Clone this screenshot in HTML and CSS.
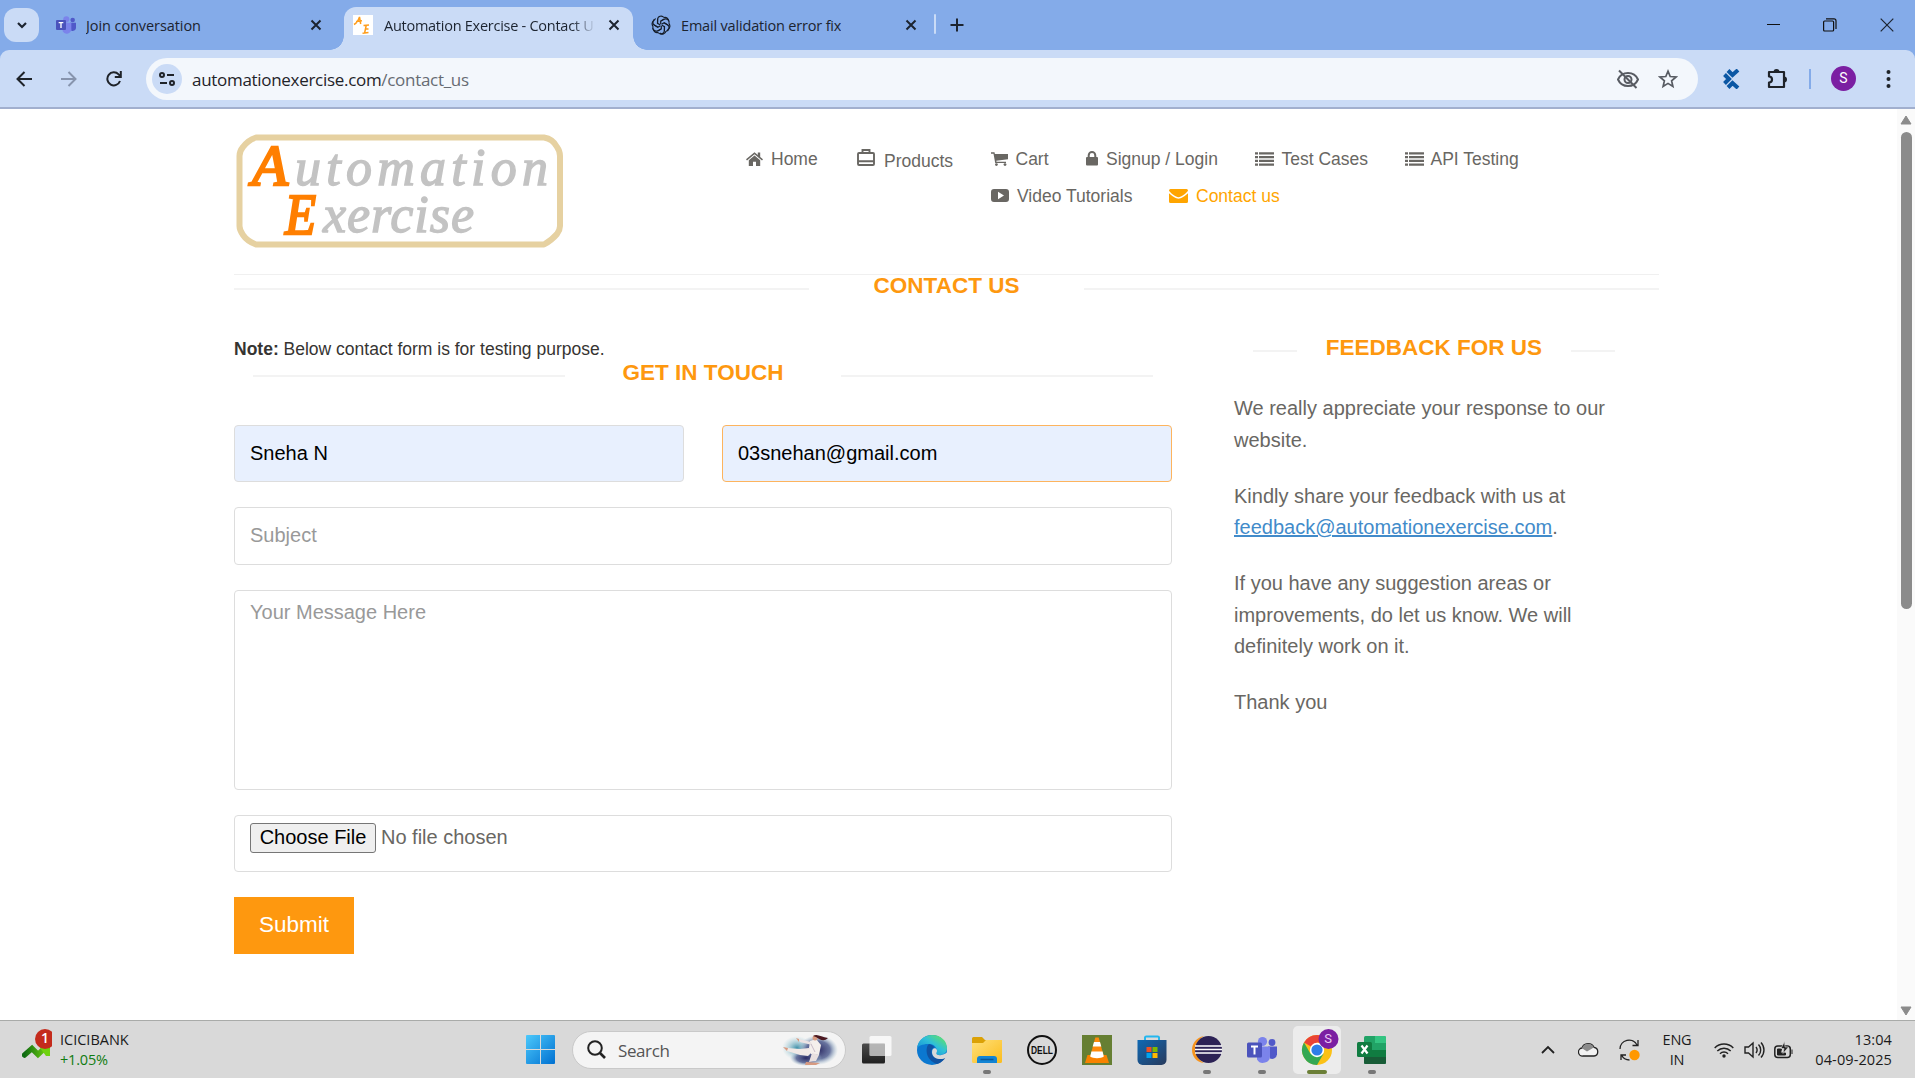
FILE: index.html
```html
<!DOCTYPE html>
<html lang="en">
<head>
<meta charset="utf-8">
<title>Automation Exercise - Contact Us</title>
<link rel="stylesheet" href="styles.css">
</head>
<body>
<svg class="defs" width="0" height="0">
  <defs>
    <symbol id="close" viewBox="0 0 12 12"><path d="M1.5 1.5l9 9M10.5 1.5l-9 9" stroke="#1c2430" stroke-width="2" fill="none"/></symbol>
    <symbol id="list" viewBox="0 0 19 14"><path d="M0 1.3h3M4 1.3h15M0 5.1h3M4 5.1h15M0 8.9h3M4 8.9h15M0 12.7h3M4 12.7h15" stroke="currentColor" stroke-width="2.2"/></symbol>
    <symbol id="teams" viewBox="0 0 30 27">
      <circle cx="25" cy="6" r="3.4" fill="#5059c9"/><path d="M21 10h9v8a5 5 0 0 1-7 4z" fill="#5059c9"/>
      <circle cx="15.500" cy="5" r="4.600" fill="#7b83eb"/><path d="M10 10h13v9a7 7 0 0 1-13 4z" fill="#7b83eb"/>
      <rect x="0" y="6" width="15" height="15" rx="1.500" fill="#4b53bc"/><path d="M4 10h7M7.500 10v8" stroke="#fff" stroke-width="2"/>
    </symbol>
    <linearGradient id="gwin" x2="1" y2="1"><stop stop-color="#4cc9fb"/><stop offset="1" stop-color="#0070d1"/></linearGradient>
    <linearGradient id="gedge" x1="0" y1="1" x2="1" y2="0"><stop stop-color="#0c7fd9"/><stop offset=".55" stop-color="#2fc0d8"/><stop offset="1" stop-color="#6bea4d"/></linearGradient>
    <linearGradient id="gfold" x2="1" y2="1"><stop stop-color="#ffe07a"/><stop offset="1" stop-color="#fbbc1c"/></linearGradient>
    <linearGradient id="gstore" x2="1" y2="1"><stop stop-color="#0f69b4"/><stop offset="1" stop-color="#283a5c"/></linearGradient>
    <linearGradient id="gdark" y2="1" x2="0"><stop stop-color="#4b4b4b"/><stop offset="1" stop-color="#202020"/></linearGradient>
    <linearGradient id="gstock" x2="1"><stop stop-color="#0f6b12"/><stop offset="1" stop-color="#6fd20e"/></linearGradient>
    <radialGradient id="gart"><stop stop-color="#2b2a63"/><stop offset=".6" stop-color="#5a6796" stop-opacity=".9"/><stop offset="1" stop-color="#9bbdd0" stop-opacity="0"/></radialGradient>
    <radialGradient id="gart2"><stop stop-color="#3f8fa8"/><stop offset="1" stop-color="#9bcbd8" stop-opacity="0"/></radialGradient>
  </defs>
</svg>

<div class="tabstrip">
  <div class="tab-search"><svg width="10" height="7" viewBox="0 0 10 7"><path d="M1 1l4 4 4-4" fill="none" stroke="#1c2430" stroke-width="2.2"/></svg></div>
  <div class="tab tab-join">
    <svg width="20" height="20" viewBox="0 0 30 27"><use href="#teams" width="30" height="27"/></svg>
    <span class="tab-title t-join">Join conversation</span>
    <svg class="x" width="12" height="12"><use href="#close"/></svg>
  </div>
  <div class="tab tab-active">
    <svg class="favicon" width="20" height="20" viewBox="0 0 20 20"><rect width="20" height="20" fill="#fff"/><path d="M1 9.500C4 8 5.500 5 6.500 2l1.200 7M3 6.500l6-.8M10.500 10.500l5.500-.6M13.200 10.500l-1.600 7.500M12.500 14h3M9.500 18.300l6-.8" fill="none" stroke="#ff9d1b" stroke-width="1.500"/></svg>
    <span class="tab-title t-active">Automation Exercise - Contact U</span>
    <svg class="x" width="12" height="12"><use href="#close"/></svg>
  </div>
  <div class="tab tab-email">
    <svg width="20" height="20" viewBox="-10 -10 20 20"><g fill="none" stroke="#141c28" stroke-width="1.150"><g id="petal"><path d="M-3.400 -1.900V-5.400A3.500 3.500 0 0 1 2.900 -7.500M3.400 -5.900L-.3 -3.900V-.8"/></g><use href="#petal" transform="rotate(60)"/><use href="#petal" transform="rotate(120)"/><use href="#petal" transform="rotate(180)"/><use href="#petal" transform="rotate(240)"/><use href="#petal" transform="rotate(300)"/><path d="M2.900-7.500A3.700 3.700 0 0 1 7.600-3.600M7.900-1.300A3.700 3.700 0 0 1 6.400 4.700M5 6.200A3.700 3.700 0 0 1-1.200 8M-2.900 7.500A3.700 3.700 0 0 1-7.600 3.600M-7.900 1.300A3.700 3.700 0 0 1-6.400-4.700"/></g></svg>
    <span class="tab-title t-email">Email validation error fix</span>
    <svg class="x" width="12" height="12"><use href="#close"/></svg>
  </div>
  <i class="tab-sep"></i>
  <svg class="newtab" width="14" height="14" viewBox="0 0 14 14"><path d="M7 .5v13M.5 7h13" stroke="#1c2430" stroke-width="2"/></svg>
  <div class="winctl">
    <svg width="13" height="14" viewBox="0 0 13 14"><path d="M0 6.500h13" stroke="#111"/></svg>
    <svg width="14" height="14" viewBox="0 0 14 14"><rect x=".6" y="3" width="10" height="10" rx="1" fill="none" stroke="#111" stroke-width="1.200"/><path d="M3 .9h8a2 2 0 0 1 2 2v8" fill="none" stroke="#111" stroke-width="1.200"/></svg>
    <svg width="14" height="14" viewBox="0 0 14 14"><path d="M.7.7l12.600 12.600M13.300.7L.7 13.300" stroke="#1c2430" stroke-width="1.200"/></svg>
  </div>
</div>

<div class="toolbar-back"><div class="toolbar">
  <div class="navbtns">
    <svg width="16" height="16" viewBox="0 0 16 16"><path d="M16 8H1.500M8.500 1L1.500 8l7 7" fill="none" stroke="#1f2329" stroke-width="2"/></svg>
    <svg width="16" height="16" viewBox="0 0 16 16"><path d="M0 8h14.500M7.500 1l7 7-7 7" fill="none" stroke="#8794ad" stroke-width="2"/></svg>
    <svg width="16" height="16" viewBox="0 0 16 16"><path d="M14 10A6.500 6.500 0 1 1 12.600 3.400L14.500 5.300M14.800 0v6h-6" fill="none" stroke="#1f2329" stroke-width="2"/></svg>
  </div>
  <div class="omnibox">
    <span class="chip"><svg width="16" height="14" viewBox="0 0 16 14"><g fill="none" stroke="#1f2329" stroke-width="2"><circle cx="3" cy="3" r="2"/><path d="M8 3h7M1 11h7"/><circle cx="13" cy="11" r="2"/></g></svg></span>
    <span class="url">automationexercise.com<span>/contact_us</span></span>
    <svg class="eye" width="22" height="20" viewBox="0 0 22 20"><g fill="none" stroke="#575b62" stroke-width="2"><path d="M1 10.500C3 6 7 4 11 4s8 2 10 6.500c-2 4.500-6 6.500-10 6.500s-8-2-10-6.500z"/><circle cx="11" cy="10.500" r="3.500"/><path d="M2 1.500l17.500 17.500"/></g></svg>
    <svg class="star" width="20" height="20" viewBox="0 0 20 20"><path d="M10 2.200l2.200 5.300 5.800.5-4.400 3.800 1.300 5.600L10 14.400l-4.900 3 1.300-5.600L2 8l5.800-.5z" fill="none" stroke="#575b62" stroke-width="1.700"/></svg>
  </div>
  <svg class="ext" width="18" height="20" viewBox="0 0 18 20"><path d="M6 1.500L10.500 6 16 1M2.500 5.500L7 10l-4.500 4.500M6 18.500l4.500-4.500L16 19" fill="none" stroke="#0b57a4" stroke-width="4"/></svg>
  <svg class="puzzle" width="21" height="21" viewBox="0 0 21 21"><path d="M2 4h15v15H2v-4.500a3 3 0 0 0 0-6z" fill="none" stroke="#1f2329" stroke-width="2.200" stroke-linejoin="round"/><path d="M6.500 4a3 3 0 0 1 6 0zM17 8.500a3 3 0 0 1 0 6z" fill="#1f2329"/></svg>
  <i class="bar-sep"></i>
  <span class="avatar">S</span>
  <svg class="kebab" width="5" height="20" viewBox="0 0 5 20"><g fill="#1f2329"><circle cx="2.500" cy="3" r="2"/><circle cx="2.500" cy="10" r="2"/><circle cx="2.500" cy="17" r="2"/></g></svg>
</div></div>

<div class="viewport">
  <div class="page">
    <header class="site-head">
      <svg class="logo" width="328" height="114" viewBox="0 0 328 114">
        <path d="M20 3.500H308Q317 5 321 13Q324 17 324 22V92Q324 96 321 100Q316 106 308 110.500H20Q11 107 7 101Q3.500 96 3.500 92V22Q3.500 17 7 13Q12 6 20 3.500z" fill="#fff" stroke="#e6d1a1" stroke-width="6" stroke-linejoin="round"/>
        <g class="script">
          <text class="cap" x="16" y="51" font-size="56" textLength="36" lengthAdjust="spacingAndGlyphs">A</text>
          <text x="59" y="51" font-size="52" textLength="253" lengthAdjust="spacing">utomation</text>
          <text class="cap" x="49" y="100" font-size="57" textLength="31" lengthAdjust="spacingAndGlyphs">E</text>
          <text x="87" y="98" font-size="52" textLength="151" lengthAdjust="spacing">xercise</text>
        </g>
      </svg>
      <nav class="menu">
        <div class="menu-row">
          <a class="m-home"><svg width="17" height="14" viewBox="0 0 17 14"><path d="M0 7.300L8.500.2l3.300 2.700V.6h2.400v4.300L17 7.300l-1 1.100-7.500-6.200L1 8.400z"/><path d="M2.800 8.300l5.700-4.700 5.700 4.700V14H10V9.800H7V14H2.800z"/></svg><span>Home</span></a>
          <a class="m-prod"><svg width="18" height="17" viewBox="0 0 18 17"><g fill="none" stroke="currentColor" stroke-width="1.900"><rect x="1" y="4" width="16" height="12" rx="1"/><path d="M5.500 4V1h7v3M1 12.200h16"/></g></svg><span>Products</span></a>
          <a class="m-cart"><svg width="17" height="14" viewBox="0 0 17 14"><path d="M0 .3h3.500l.4 1.600H17v5.300L5.300 8.700l.2 1H15v1.400H4.200L2.500 1.700H0z"/><circle cx="5.400" cy="12.600" r="1.400"/><circle cx="14" cy="12.600" r="1.400"/></svg><span>Cart</span></a>
          <a class="m-sign"><svg width="12" height="15" viewBox="0 0 12 15"><rect y="6" width="12" height="8.500" rx="1"/><path d="M2.700 7V4.400a3.300 3.300 0 0 1 6.600 0V7" fill="none" stroke="currentColor" stroke-width="2"/></svg><span>Signup / Login</span></a>
          <a class="m-test"><svg width="19" height="14"><use href="#list"/></svg><span>Test Cases</span></a>
          <a class="m-api"><svg width="19" height="14"><use href="#list"/></svg><span>API Testing</span></a>
        </div>
        <div class="menu-row second">
          <a class="m-video"><svg width="18" height="13" viewBox="0 0 18 13"><path fill-rule="evenodd" d="M3 0h12a3 3 0 0 1 3 3v7a3 3 0 0 1-3 3H3a3 3 0 0 1-3-3V3a3 3 0 0 1 3-3zm4 2.800v7.400l6-3.700z"/></svg><span>Video Tutorials</span></a>
          <a class="m-contact"><svg width="19" height="14" viewBox="0 0 19 14"><path d="M0 1.500A1.500 1.500 0 0 1 1.500 0h16A1.500 1.500 0 0 1 19 1.500C18 4 12 8.200 9.500 8.200S1 4 0 1.500z"/><path d="M0 4.300c3 3 7 5.400 9.500 5.400S16 7.300 19 4.300V12.500A1.500 1.500 0 0 1 17.500 14h-16A1.500 1.500 0 0 1 0 12.500z"/></svg><span>Contact us</span></a>
        </div>
      </nav>
    </header>
    <h2 class="heading main-heading"><i></i><span>Contact Us</span><i></i></h2>
    <div class="columns">
      <section class="form-col">
        <p class="note"><b>Note:</b> Below contact form is for testing purpose.</p>
        <h2 class="heading touch-heading"><i></i><span>Get In Touch</span><i></i></h2>
        <form class="contact-form">
          <div class="pair">
            <input class="field filled" value="Sneha N">
            <input class="field filled active" value="03snehan@gmail.com">
          </div>
          <input class="field subject" placeholder="Subject">
          <textarea class="field message" placeholder="Your Message Here"></textarea>
          <div class="field file"><button type="button">Choose File</button><span>No file chosen</span></div>
          <button class="submit" type="button">Submit</button>
        </form>
      </section>
      <aside class="feedback">
        <h2 class="heading feed-heading"><i></i><span>Feedback For Us</span><i></i></h2>
        <p>We really appreciate your response to our<br>website.</p>
        <p>Kindly share your feedback with us at<br><a>feedback@automationexercise.com</a>.</p>
        <p>If you have any suggestion areas or<br>improvements, do let us know. We will<br>definitely work on it.</p>
        <p>Thank you</p>
      </aside>
    </div>
  </div>
  <div class="scrollbar">
    <svg width="12" height="10" viewBox="0 0 12 10"><path d="M6 1l5 8H1z" fill="#8b8b8b" stroke="#8b8b8b" stroke-linejoin="round"/></svg>
    <i class="thumb"></i>
    <svg class="down" width="12" height="10" viewBox="0 0 12 10"><path d="M6 9l5-8H1z" fill="#8b8b8b" stroke="#8b8b8b" stroke-linejoin="round"/></svg>
  </div>
</div>

<div class="taskbar">
  <div class="widget">
    <svg width="30" height="32" viewBox="0 0 30 32"><path d="M2.500 27l7.500-6.500 6 6L25 18" fill="none" stroke="url(#gstock)" stroke-width="5.500" stroke-linecap="round"/><path d="M16 17h12v11h-4z" fill="#6fd20e"/><circle cx="23" cy="11" r="10" fill="#c42b1c"/></svg>
    <b class="badge">1</b>
    <div class="stock"><span>ICICIBANK</span><span class="up">+1.05%</span></div>
  </div>
  <svg class="start" width="29" height="29" viewBox="0 0 29 29"><path d="M1 0h13v14H0V1a1 1 0 0 1 1-1zM15 0h13a1 1 0 0 1 1 1v13H15zM0 15h14v14H1a1 1 0 0 1-1-1zM15 15h14v13a1 1 0 0 1-1 1H15z" fill="url(#gwin)"/></svg>
  <div class="search">
    <svg width="19" height="19" viewBox="0 0 19 19"><circle cx="8" cy="8" r="6.800" fill="none" stroke="#222" stroke-width="2"/><path d="M13 13l5 5" stroke="#222" stroke-width="2.600"/></svg>
    <span>Search</span>
    <svg class="art" width="56" height="32" viewBox="0 0 56 32"><ellipse cx="15" cy="14" rx="15" ry="12" fill="url(#gart2)"/><ellipse cx="36" cy="16" rx="20" ry="15" fill="url(#gart)"/><ellipse cx="24" cy="24" rx="16" ry="8" fill="url(#gart)"/><path d="M5 14l13 1 9-1 4 3-5 5-8-1-13-4z" fill="#f1e9e6"/><path d="M28 7l6-2 5 6-2 10-8-1-2-6z" fill="#f5efec"/><path d="M17 5l12 3 1 3-12-3z" fill="#ece3e3"/><path d="M30 19l7 2-3 6-7 1z" fill="#e9e0e0"/><path d="M29 10l4 8" stroke="#c9bcc8" fill="none"/><circle cx="33" cy="4" r="2.500" fill="#d79a80"/><path d="M31 2c4-3 8 1 15 2-4 4-8 2-12-1z" fill="#4b1820"/><path d="M1 13l5 1-1 3zM14 4l3 1v3zM24 28l14 1-4 2H23z" fill="#d79a80"/></svg>
  </div>
  <div class="apps">
    <span class="app"><svg width="30" height="30" viewBox="0 0 30 30"><rect x="0" y="8.500" width="23" height="20" rx="1.500" fill="url(#gdark)"/><rect x="7.500" y="1" width="22" height="20" rx="1.500" fill="#fff" fill-opacity=".78"/><path d="M7.500 8.500H23V21H7.500z" fill="#888" fill-opacity=".42"/></svg></span>
    <span class="app"><svg width="30" height="30" viewBox="0 0 30 30"><circle cx="15" cy="15" r="15" fill="#0b78d0"/><path d="M0 13C1 5 8 0 15 0c9 0 15 6 15 13 0 5-4 7-7 7-4 0-5-2-4-3 2-3-1-8-7-8C7 8.500 1 11 0 13z" fill="url(#gedge)"/><path d="M12 9c-4 3-4 16 8 20 4-1 7-4 8.500-6.500-5 3-13 1-14-5-.5-3 1.500-5 3-5-1-2-3-3-5.500-3.500z" fill="#1153a2"/><path d="M19.500 17.500c-1 1.500 1 3 4 2.700 2.500-.2 5-1.500 7-3v5l-1.500.5c-5 3-14 1-14-5.500 0-3 1.500-4.300 3-4 2 .5 2.500 2.500 1.500 4.300z" fill="#d9d9d9"/></svg></span>
    <span class="app run"><svg width="30" height="30" viewBox="0 0 30 30"><path d="M0 3.500A1.500 1.500 0 0 1 1.500 2H10l3 3h16v7H0z" fill="#dba106"/><path d="M0 8h11l3-3h16v21.500a1.500 1.500 0 0 1-1.500 1.500h-27A1.500 1.500 0 0 1 0 26.500z" fill="url(#gfold)"/><path d="M5 28v-4a3 3 0 0 1 3-3h14a3 3 0 0 1 3 3v4z" fill="#1284d4"/><path d="M8.500 24.500h13" stroke="#0b5797" stroke-width="1.500"/></svg></span>
    <span class="app"><svg width="30" height="30" viewBox="0 0 30 30"><circle cx="15" cy="15" r="14" fill="none" stroke="#111" stroke-width="2"/><text x="4" y="18.800" font-size="10.500" textLength="22" lengthAdjust="spacingAndGlyphs" class="dell">DELL</text></svg></span>
    <span class="app"><svg width="30" height="30" viewBox="0 0 30 30"><path fill="#667f33" d="M0 0h30v30H0z"/><path d="M5.500 20h19l2.500 8H3z" fill="#f98200"/><path d="M13.300 2.500h3.400L22 22c-3 2-11 2-14 0z" fill="#ff8a0a"/><path d="M12 7h6l1.300 4.500h-8.600zM9.400 16.500h11.200l1.200 5c-3 2.200-10.600 2.200-13.600 0z" fill="#fff"/></svg></span>
    <span class="app"><svg width="30" height="30" viewBox="0 0 30 30"><path d="M8 6V2.500A1.200 1.200 0 0 1 9.200 1.500h11.600A1.200 1.200 0 0 1 22 2.500V6" fill="none" stroke="#24b7ef" stroke-width="2"/><path d="M.5 5h29v20a5 5 0 0 1-5 5h-19a5 5 0 0 1-5-5z" fill="url(#gstore)"/><path fill="#f25022" d="M9.500 12h5v5h-5z"/><path fill="#7fba00" d="M15.500 12h5v5h-5z"/><path fill="#00a4ef" d="M9.500 18h5v5h-5z"/><path fill="#ffb900" d="M15.500 18h5v5h-5z"/></svg></span>
    <span class="app run"><svg width="30" height="30" viewBox="0 0 30 30"><path d="M12 1C-4 4-4 26 12 28 1 22 1 7 12 1z" fill="#f7941e"/><circle cx="16.500" cy="14.500" r="13.500" fill="#2c2255"/><path d="M3 11h27M3 14.500h27M3 18h27" stroke="#fff" stroke-width="1.500"/></svg></span>
    <span class="app run"><svg width="30" height="30" viewBox="0 0 30 27"><use href="#teams" width="30" height="27"/></svg></span>
    <span class="app chrome"><svg width="42" height="42" viewBox="0 0 42 42"><circle cx="18" cy="24" r="15" fill="#fbc116"/><path d="M18 24L5 16.500A15 15 0 0 1 31 16.500H18z" fill="#ea4335"/><path d="M5 16.500A15 15 0 0 0 18 39l6.500-11.200L18 24l-6.500 3.800z" fill="#34a853"/><circle cx="18" cy="24" r="7.200" fill="#fff"/><circle cx="18" cy="24" r="5.600" fill="#2f7de9"/><circle cx="29.500" cy="13" r="10" fill="#7b1fa2"/></svg><b>S</b></span>
    <span class="app run"><svg width="30" height="30" viewBox="0 0 30 30"><rect x="7" y="1" width="22" height="28" rx="1.500" fill="#21a366"/><path fill="#33c481" d="M18 1h9.500A1.500 1.500 0 0 1 29 2.500V8H18z"/><path fill="#107c41" d="M7 15h22v7H7z"/><path fill="#185c37" d="M7 22h22v5.500a1.500 1.500 0 0 1-1.500 1.500h-19A1.500 1.500 0 0 1 7 27.500z"/><rect x="0" y="7" width="15" height="15" rx="1.500" fill="#107c41"/><path d="M4.500 10.500l6 8M10.500 10.500l-6 8" stroke="#fff" stroke-width="2.200"/></svg></span>
  </div>
  <div class="tray">
    <svg class="up-arrow" width="14" height="9" viewBox="0 0 14 9"><path d="M1 8l6-6 6 6" fill="none" stroke="#222" stroke-width="1.800"/></svg>
    <svg class="cloud" width="21" height="15" viewBox="0 0 21 15"><path d="M5 14a4 4 0 0 1-1-8A6.500 6.500 0 0 1 16 5.300 4.400 4.400 0 0 1 16 14z" fill="#f2f2f2" stroke="#222" stroke-width="1.300"/><path d="M4 6.300A6.300 6.300 0 0 1 15.800 5.500L9 9.500z" fill="#8b8b8b"/></svg>
    <svg class="sync" width="21" height="22" viewBox="0 0 21 22"><path d="M1 10A9 9 0 0 1 18 6M19 1v5.500h-5.500M2 21v-5h5M2.500 16a9 9 0 0 0 8 5" fill="none" stroke="#222" stroke-width="1.300"/><circle cx="15.500" cy="16" r="5.200" fill="#ff9800"/></svg>
    <div class="lang"><span>ENG</span><span>IN</span></div>
    <svg class="wifi" width="20" height="16" viewBox="0 0 20 16"><g fill="none" stroke="#222" stroke-width="1.500"><path d="M.7 6a13 13 0 0 1 18.600 0M3.300 9a9.500 9.500 0 0 1 13.400 0M6 11.700a5.700 5.700 0 0 1 8 0"/></g><circle cx="10" cy="14" r="1.700" fill="#222"/></svg>
    <svg class="sound" width="21" height="18" viewBox="0 0 21 18"><g fill="none" stroke="#222" stroke-width="1.400"><path d="M1 6h3.500L9 2v14l-4.500-4H1z"/><path d="M12 6a5 5 0 0 1 0 6M14.500 3.500a8 8 0 0 1 0 11M17 1.500a11 11 0 0 1 0 15"/></g></svg>
    <svg class="battery" width="20" height="18" viewBox="0 0 20 18"><rect x=".8" y="5" width="15.500" height="11.500" rx="3" fill="none" stroke="#222" stroke-width="1.500"/><path d="M3.500 8h4l-1 4h5v2h-8zM18 8.500v4.500" fill="#222" stroke="#222"/><path d="M10.500.5L7 7.500h3l-1 5L14.500 6H11z" fill="#222" stroke="#d9d9d9" stroke-width=".6"/></svg>
    <div class="clock"><span>13:04</span><span>04-09-2025</span></div>
  </div>
</div>
</body>
</html>
```
FILE: styles.css
```css
* { box-sizing: border-box; }
html, body { height: 100%; }
body {
  margin: 0;
  width: 1915px;
  height: 1078px;
  overflow: hidden;
  display: flex;
  flex-direction: column;
  background: #fff;
  font-family: "Liberation Sans", Arial, sans-serif;
}
svg { display: block; flex: none; }
.defs { position: absolute; }
h2, p { margin: 0; }

/* browser tab strip */
.tabstrip {
  height: 50px;
  flex: none;
  display: flex;
  align-items: center;
  background: #84abe9;
  padding-left: 4px;
  font-family: "Open Sans", "Noto Sans", sans-serif;
}
.tab-search {
  width: 35px;
  height: 34px;
  border-radius: 12px;
  background: #cadbf6;
  display: grid;
  place-items: center;
}
.tab { display: flex; align-items: center; }
.tab-title { font-size: 14.5px; color: #1c2430; white-space: nowrap; overflow: hidden; line-height: 24px; padding-top: 1px; }
.tab-join { width: 305px; padding: 0 22px 0 17px; }
.tab .x { margin-left: auto; }
.tab-join .tab-title { margin-left: 10px; }
.t-join { letter-spacing: -0.08px; }
.t-active { letter-spacing: -0.26px; width: 210px; margin-left: 11px; -webkit-mask-image: linear-gradient(90deg, #000 188px, transparent 212px); mask-image: linear-gradient(90deg, #000 188px, transparent 212px); }
.t-email { letter-spacing: -0.18px; margin-left: 10px; }
.tab-active {
  position: relative;
  width: 289px;
  height: 43px;
  margin-top: 7px;
  padding: 0 13px 7px 9px;
  border-radius: 12px 12px 0 0;
  background: #cadbf6;
}
.tab-active::before, .tab-active::after {
  content: "";
  position: absolute;
  bottom: 0;
  width: 14px;
  height: 14px;
}
.tab-active::before { left: -14px; background: radial-gradient(circle at 0 0, #84abe9 13.5px, #cadbf6 14px); }
.tab-active::after { right: -14px; background: radial-gradient(circle at 100% 0, #84abe9 13.5px, #cadbf6 14px); }
.tab-email { width: 301px; padding: 0 17px 0 18px; }
.tab-sep { width: 2px; height: 20px; background: #cadbf6; border-radius: 1px; margin-top: -2px; }
.newtab { margin-left: 14px; }
.winctl { margin-left: auto; display: flex; gap: 43px; padding-right: 21px; }

/* browser toolbar */
.toolbar-back { flex: none; background: #84abe9; }
.toolbar {
  height: 59px;
  border-bottom: 2px solid #a1afce;
  border-radius: 9px 9px 0 0;
  background: #cadbf6;
  display: flex;
  align-items: center;
  padding-left: 15.5px;
}
.navbtns { display: flex; gap: 29px; width: 130.5px; }
.omnibox {
  width: 1552px;
  height: 42px;
  border-radius: 21px;
  background: #f3f7fc;
  display: flex;
  align-items: center;
  padding: 0 20px 0 6px;
}
.chip { width: 30px; height: 30px; border-radius: 50%; background: #cadbf6; display: grid; place-items: center; }
.url {
  margin-left: 10px;
  padding-top: 2px;
  font: 17px/24px "Open Sans", "Noto Sans", sans-serif;
  letter-spacing: -0.3px;
  color: #1f2329;
}
.url span { color: #666b73; }
.eye { margin-left: auto; }
.star { margin-left: 19px; }
.ext { margin-left: 24px; }
.puzzle { margin-left: 27px; }
.bar-sep { width: 2px; height: 20px; background: #84abe9; margin-left: 21px; }
.avatar {
  width: 25px;
  height: 25px;
  border-radius: 50%;
  background: #7b1fa2;
  color: #fff;
  font: 14px/25px Roboto, sans-serif;
  text-align: center;
  margin-left: 20px;
}
.kebab { margin-left: 29.5px; }

/* page area */
.viewport { flex: none; height: 911px; display: flex; }
.page { width: 1897px; padding-left: 234px; }
.site-head { width: 1425px; height: 166px; border-bottom: 1px solid #f0f0f0; display: flex; }
.logo { margin: 25px 0 0 2px; }
.script { font-family: "Liberation Serif", serif; font-style: italic; fill: #c3c3c3; stroke: #c3c3c3; stroke-width: 1.4px; }
.script .cap { fill: #ff7f00; stroke: #ff7f00; stroke-width: 2.4px; }
.menu { margin-left: 182px; padding-top: 40px; color: #696763; font-size: 17.5px; }
.menu-row { display: flex; height: 24px; }
.menu-row.second { margin-top: 13px; padding-left: 245px; }
.menu a { display: flex; align-items: flex-start; white-space: nowrap; line-height: 20px; flex: none; }
.menu svg { fill: currentColor; margin-top: 3px; }
.m-home { width: 111px; } .m-home span { margin-left: 8px; }
.m-prod { width: 134px; } .m-prod span { margin: 2px 0 0 9px; }
.menu .m-prod svg { margin-top: 0; }
.m-cart { width: 95px; } .m-cart span { margin-left: 7.5px; }
.m-sign { width: 169px; } .m-sign span { margin-left: 8px; }
.menu .m-sign svg { margin-top: 2px; }
.m-test { width: 150px; } .m-test span { margin-left: 7.5px; }
.m-api span { margin-left: 6.5px; }
.m-video { width: 178px; } .m-video span { margin-left: 8px; }
.m-contact { color: orange; } .m-contact span { margin-left: 8px; }

.heading {
  display: flex;
  height: 25px;
  font-size: 22.5px;
  line-height: 23px;
  font-weight: bold;
  color: #fe980f;
  text-transform: uppercase;
  white-space: nowrap;
}
.heading i { height: 2px; background: #f3f3f3; margin-top: 14px; flex: none; }
.heading span { flex: 1; text-align: center; }
.main-heading { width: 1425px; margin-top: -1px; }
.main-heading i { width: 575px; }
.columns { display: flex; padding-top: 40px; }
.form-col { width: 938px; }
.note { font-size: 17.5px; line-height: 20px; color: #363432; }
.touch-heading { margin: 2px 0 0 19px; width: 900px; }
.touch-heading i { width: 312px; }
.contact-form { margin-top: 39px; display: flex; flex-direction: column; gap: 25px; }
.pair { display: flex; gap: 38px; }
.field {
  width: 100%;
  height: 57px;
  border: 1px solid #ddd;
  border-radius: 4px;
  padding: 0 15px;
  background: #fff;
  font: 20px/28px "Liberation Sans", Arial, sans-serif;
  color: #696763;
  outline: none;
}
.field::placeholder { color: #999; opacity: 1; }
.filled { background: #e8f0fe; color: #000; }
.active { border-color: #fdb45e; }
.subject { height: 58px; padding-bottom: 2px; }
.message { height: 200px; padding: 7px 15px; resize: none; display: block; }
.file { display: flex; align-items: flex-start; padding-top: 7px; }
.file button {
  width: 126px;
  height: 30px;
  padding: 0 0 2px;
  border: 1px solid #767676;
  border-radius: 3px;
  background: #efefef;
  color: #000;
  font: 20px/26px "Liberation Sans", Arial, sans-serif;
}
.file span { margin: 0 0 0 5px; }
.submit {
  width: 120px;
  height: 57px;
  border: 0;
  background: #fe980f;
  color: #fff;
  font: 22.5px/55px "Liberation Sans", Arial, sans-serif;
  padding: 0 0 2px;
}
.feedback { margin-left: 62px; width: 430px; color: #696763; font-size: 20px; line-height: 31.5px; }
.feed-heading { margin: -3px 0 32px 19px; width: 362px; }
.feed-heading i { width: 44px; }
.feedback p { margin-bottom: 24.5px; white-space: nowrap; }
.feedback a { color: #428bca; text-decoration: underline; }

.scrollbar { width: 18px; background: #fafafa; padding-top: 6px; display: flex; flex-direction: column; align-items: center; }
.thumb { width: 11px; height: 477px; border-radius: 6px; background: #8b8b8b; margin-top: 7px; }
.down { margin-top: auto; margin-bottom: 4px; }

/* desktop taskbar */
.taskbar {
  height: 58px;
  flex: none;
  border-top: 1px solid #a9aba9;
  background: #d9d9d9;
  display: flex;
  align-items: center;
  padding: 0 23px 0 22px;
  font-family: "Open Sans", "Noto Sans", sans-serif;
  color: #1b1b1b;
}
.widget { position: relative; width: 504px; display: flex; gap: 8px; align-items: center; }
.widget svg { margin-top: -12px; }
.badge { position: absolute; left: 13px; top: -2px; width: 20px; text-align: center; color: #fff; font-size: 14px; line-height: 20px; font-weight: 600; }
.stock, .lang, .clock { display: flex; flex-direction: column; font-size: 14.5px; line-height: 20px; }
.stock { letter-spacing: 0; }
.stock .up { letter-spacing: -0.2px; }
.lang { letter-spacing: -0.2px; }
.up { color: #107c10; }
.search {
  width: 274px;
  height: 38px;
  margin-left: 17px;
  border-radius: 19px;
  border: 1px solid #c9c9c9;
  background: #f4f4f4;
  display: flex;
  align-items: center;
  padding: 0 7px 0 14px;
  color: #555;
  font-size: 17px;
}
.search span { margin-left: 12px; letter-spacing: -0.4px; padding-top: 1px; }
.art { margin-left: auto; }
.apps { display: flex; margin-left: 3px; }
.app { position: relative; width: 55px; height: 57px; display: grid; place-items: center; }
.run::after, .chrome::after { content: ""; position: absolute; left: 24px; bottom: 4px; width: 8px; height: 4px; border-radius: 2px; background: #777; }
.chrome::before { content: ""; position: absolute; left: 4px; top: 5px; width: 48px; height: 48px; border-radius: 5px; background: #ececec; }
.chrome::after { left: 18px; width: 20px; background: #6b7f37; }
.chrome svg { position: relative; left: 3px; top: -3px; }
.chrome b { position: absolute; left: 29px; top: 8px; width: 20px; text-align: center; font: 13px/20px Roboto, sans-serif; color: #eac8f5; }
.dell { font-family: "Liberation Sans", sans-serif; font-weight: bold; fill: #111; }
.tray { margin-left: auto; display: flex; align-items: center; }
.cloud { margin-left: 23px; }
.sync { margin-left: 20px; }
.lang { width: 74px; text-align: center; }
.sound { margin-left: 10px; }
.battery { margin-left: 9px; }
.clock { width: 98px; text-align: right; letter-spacing: 0.1px; }
```
